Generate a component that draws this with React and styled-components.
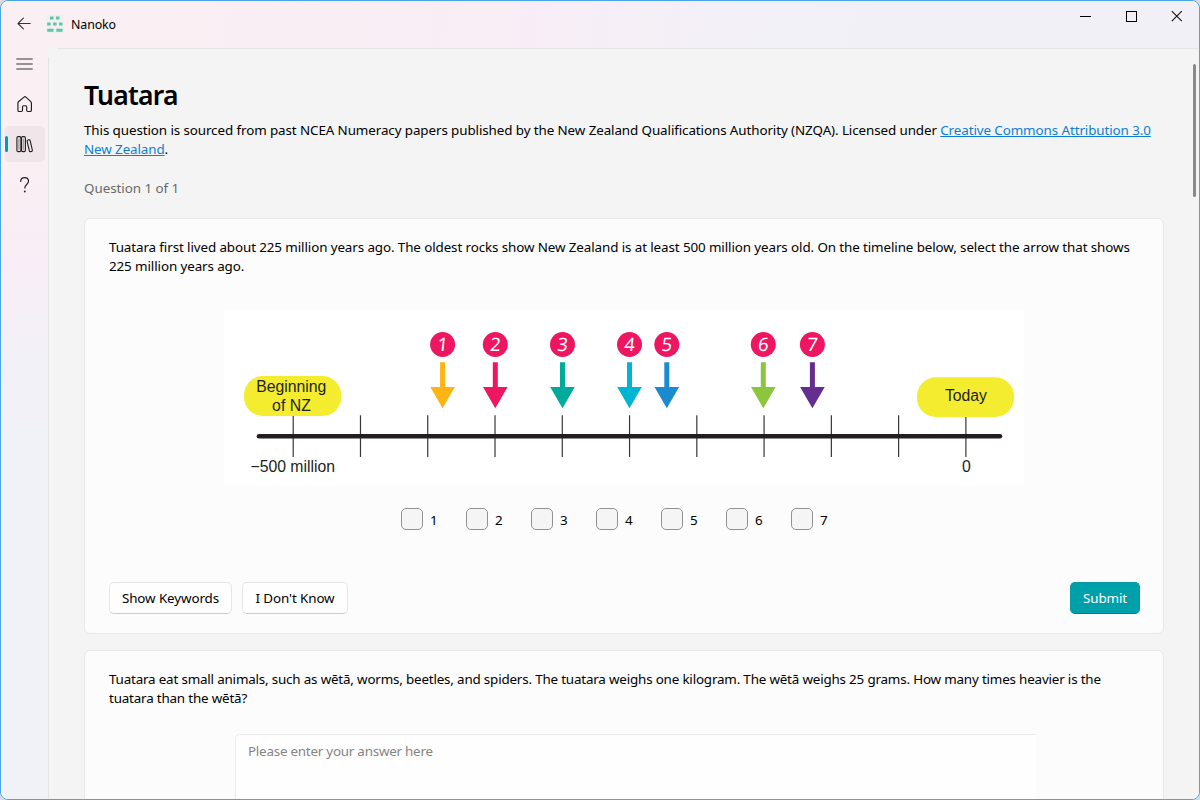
import React from "react";
import styled, { createGlobalStyle } from "styled-components";

const Global = createGlobalStyle`
  * { box-sizing: border-box; }
  html, body { margin: 0; background: #d9dde3; overflow: hidden; }
  body { font-family: "Noto Sans", "Open Sans", sans-serif; font-size: 13.4px; line-height: 19px; color: #000; }
  button { font: inherit; color: inherit; }
`;

const Window = styled.div`
  width: 1200px;
  height: 800px;
  overflow: hidden;
  display: flex;
  flex-direction: column;
  border: 1px solid #4ba4e6;
  border-radius: 8px;
`;

const TitleBar = styled.header`
  height: 47px;
  flex: none;
  display: flex;
  align-items: flex-start;
  justify-content: space-between;
  background: linear-gradient(100deg, #faeff2 0%, #faeff3 15%, #f9edf6 42%, #f3f0f7 60%, #f1f0f7 100%);
`;

const Brand = styled.div`
  display: flex;
  align-items: center;
  height: 46px;
  padding-left: 16px;
  svg { display: block; }
`;

const BrandMark = styled.svg`
  margin-left: 13px;
`;

const BrandName = styled.span`
  margin: 2px 0 0 7px;
  font-size: 12.4px;
  line-height: 16px;
  letter-spacing: -0.12px;
`;

const WindowControls = styled.div`
  display: flex;
  margin-right: -1px;
  svg { display: block; }
`;

const ControlButton = styled.div`
  width: 46px;
  height: 30px;
  display: flex;
  align-items: center;
  justify-content: center;
`;

const Body = styled.div`
  flex: 1;
  min-height: 0;
  display: flex;
`;

const Rail = styled.nav`
  width: 47px;
  flex: none;
  display: flex;
  flex-direction: column;
  gap: 4px;
  padding-left: 4px;
  background: linear-gradient(to bottom, #faeff2 0, #faeff3 120px, #f9edf6 205px, #f3f0f7 300px, #f0f2f8 410px, #f0f2f8 100%);
`;

const RailItem = styled.div`
  position: relative;
  width: 40px;
  height: 36px;
  flex: none;
  display: flex;
  align-items: center;
  justify-content: center;
  border-radius: 5px;
  background: ${(p) => (p.$active ? "#f0e6ea" : "transparent")};
  svg { display: block; }
  &:first-child { height: 34px; padding: 0 1px 2px 0; }
  &:last-child { padding-top: 1px; }
  &::before {
    content: "";
    display: ${(p) => (p.$active ? "block" : "none")};
    position: absolute;
    left: 0;
    top: 10px;
    width: 3px;
    height: 16px;
    border-radius: 2px;
    background: #00a0aa;
  }
`;

const Content = styled.main`
  flex: 1;
  min-width: 0;
  overflow: hidden;
  padding: 1px 0 0 1px;
  display: flex;
  justify-content: space-between;
  background:
    linear-gradient(#e5e4e7, #e5e4e7) 9px 0 / 100% 1px no-repeat,
    linear-gradient(#e5e4e7, #e5e4e7) 0 9px / 1px 100% no-repeat,
    #f4f4f4;
`;

const Page = styled.div`
  width: 1080px;
  margin-left: 35px;
  flex: none;
`;

const ScrollThumb = styled.div`
  width: 3px;
  height: 133px;
  margin: 15px 3px 0 0;
  border-radius: 2px;
  background: #8a8a8a;
`;

const Title = styled.h1`
  margin: 28px 0 0;
  font-size: 26.5px;
  line-height: 36px;
  font-weight: 600;
  letter-spacing: -0.75px;
`;

const Line = styled.div`
  white-space: nowrap;
  height: 19px;
  letter-spacing: ${(p) => p.$ls ?? -0.1}px;
`;

const Source = styled.div`
  margin-top: 8px;
`;

const Link = styled.a`
  color: #0e7fd0;
  text-decoration: underline;
  text-decoration-thickness: 1px;
  text-underline-offset: 1px;
`;

const Counter = styled(Line)`
  margin: 20px 0 20px;
  color: #6a6a6a;
`;

const Card = styled.section`
  height: ${(p) => p.$height}px;
  margin-bottom: 16px;
  padding: 19px 23px 19px 24px;
  display: flex;
  flex-direction: column;
  border: 1px solid #e9e9e9;
  border-radius: 6px;
  background: #fcfcfc;
`;

const Figure = styled.svg`
  display: block;
  flex: none;
  margin: 34px auto 0 115px;
  background: #fff;
  font-family: "Liberation Sans", Arial, sans-serif;
  fill: #231f20;
`;

const Options = styled.div`
  display: flex;
  margin: 24px 0 0 292px;
`;

const Option = styled.label`
  width: 65px;
  height: 22px;
  display: flex;
  align-items: center;
  gap: 7px;
`;

const OptionText = styled.span`
  padding-top: 2px;
`;

const Box = styled.span`
  width: 22px;
  height: 22px;
  border: 1px solid #929292;
  border-radius: 5px;
  background: #f5f5f5;
`;

const Actions = styled.div`
  display: flex;
  gap: 10px;
  margin-top: auto;
`;

const Button = styled.button`
  width: ${(p) => p.$width}px;
  height: 32px;
  padding: 0;
  white-space: nowrap;
  border: 1px solid ${(p) => (p.$primary ? "#069aa4" : "#e6e6e6")};
  border-bottom-color: ${(p) => (p.$primary ? "#04818a" : "#cbcbcb")};
  border-radius: 5px;
  background: ${(p) => (p.$primary ? "#00a0aa" : "#fefefe")};
  color: ${(p) => (p.$primary ? "#fff" : "#000")};
  letter-spacing: -0.1px;
  margin-left: ${(p) => (p.$primary ? "auto" : "0")};
`;

const Answer = styled.div`
  width: 801px;
  height: 120px;
  margin: 26px 0 0 126px;
  padding: 7px 12px;
  border: 1px solid #ebebeb;
  border-right: 0;
  border-radius: 5px 0 0 0;
  background: #fefefe;
  color: #858585;
  letter-spacing: -0.23px;
`;

const TICKS = Array.from({ length: 11 }, (_, i) => 69.2 + i * 67.27);
const ARROWS = [
  { x: 218.6, color: "#fdb515" },
  { x: 271.3, color: "#ee1660" },
  { x: 338.5, color: "#00ab9c" },
  { x: 405.5, color: "#00b5d2" },
  { x: 442.8, color: "#1b8bd0" },
  { x: 539.3, color: "#8cc63f" },
  { x: 588.4, color: "#662d91" },
];

function Timeline() {
  return (
    <Figure width="800" height="174" viewBox="0 0 800 174">
      {TICKS.map((x) => (
        <line key={x} x1={x} x2={x} y1="105.3" y2="147" stroke="#3a3637" strokeWidth="1.2" />
      ))}
      <line x1="35" x2="776" y1="126.2" y2="126.2" stroke="#231f20" strokeWidth="4.6" strokeLinecap="round" />
      <rect x="20" y="66" width="97.3" height="40" rx="19" fill="#f4ec2e" />
      <rect x="693" y="67.2" width="97" height="39.8" rx="19" fill="#f4ec2e" />
      <text x="67.3" y="82.3" fontSize="15.8" textAnchor="middle" textLength="70">Beginning</text>
      <text x="67.5" y="101" fontSize="15.8" textAnchor="middle" textLength="39">of NZ</text>
      <text x="742" y="91" fontSize="15.8" textAnchor="middle" textLength="42">Today</text>
      <text x="68.7" y="162" fontSize="15.8" textAnchor="middle" textLength="84.5">−500 million</text>
      <text x="742.3" y="162" fontSize="15.8" textAnchor="middle">0</text>
      {ARROWS.map(({ x, color }, i) => (
        <g key={color}>
          <circle cx={x} cy="34.5" r="12.5" fill="#ee1660" />
          <text
            transform={`translate(${x - 0.5} 41) skewX(-6)`}
            fontSize="18.5"
            fontFamily="'Noto Sans', sans-serif"
            textAnchor="middle"
            fill="#fff"
          >
            {i + 1}
          </text>
          <path d={`M${x - 2.5} 52.2h5v24.7h9.8L${x} 98.2L${x - 12.3} 76.9h9.8z`} fill={color} />
        </g>
      ))}
    </Figure>
  );
}

function BackIcon() {
  return (
    <svg width="16" height="16" viewBox="0 0 16 16" fill="none" stroke="#333" strokeWidth="1.1" strokeLinecap="round" strokeLinejoin="round">
      <path d="M13.2 7.5H1M6.4 2.1L1 7.5l5.4 5.4" />
    </svg>
  );
}

function Logo() {
  return (
    <BrandMark width="18" height="18" viewBox="0 0 18 18">
      <rect width="18" height="18" fill="#f0f0f1" />
      <g fill="#5bc5a7">
        <path d="M4 1.5h3.5v3H4zM10 1.5h3.5v3H10zM1.2 7.4h3.4v3H1.2zM7.2 7.4h3.4v3H7.2zM13.1 7.4h3.4v3h-3.4zM1.2 13.7h6.3v3H1.2zM10.3 13.7h6.3v3h-6.3z" />
      </g>
    </BrandMark>
  );
}

function MenuIcon() {
  return (
    <svg width="18" height="16" viewBox="0 0 18 16" fill="none" stroke="#777377" strokeWidth="1.6">
      <path d="M.3 3h16.4M.3 8h16.4M.3 13h16.4" />
    </svg>
  );
}

function HomeIcon() {
  return (
    <svg width="18" height="18" viewBox="0 0 18 18" fill="none" stroke="#1f1f1f" strokeWidth="1.15" strokeLinejoin="round">
      <path d="M8 2.1L2.5 6.7a1.8 1.8 0 0 0-.6 1.3v7.2c0 .8.5 1.3 1.2 1.3h2.2c.7 0 1.2-.5 1.2-1.2v-3.4c0-.8.4-1.2 1.1-1.2h2c.7 0 1.1.4 1.1 1.2v3.4c0 .7.5 1.2 1.2 1.2h2.2c.8 0 1.3-.5 1.3-1.3V8c0-.5-.2-1-.6-1.3L9.9 2.1a1.5 1.5 0 0 0-1.9 0z" />
    </svg>
  );
}

function LibraryIcon() {
  return (
    <svg width="18" height="18" viewBox="0 0 18 18" fill="none" stroke="#1f1f1f" strokeWidth="1.1">
      <path d="M2.9 3.5v11.2M7.4 3.5v11.2" stroke="#a59fa3" strokeWidth="1.4" />
      <rect x=".9" y="1.6" width="4" height="15" rx="1.3" />
      <rect x="5.5" y="1.6" width="3.9" height="15" rx="1.3" />
      <rect x="12.2" y="4.7" width="3.1" height="12" rx="1.1" transform="rotate(-13 13.7 10.7)" />
    </svg>
  );
}

function HelpIcon() {
  return (
    <svg width="18" height="18" viewBox="0 0 18 18" fill="none" stroke="#1f1f1f" strokeWidth="1.2" strokeLinecap="round">
      <path d="M4.7 5.5c.1-2.3 1.6-3.9 3.9-3.9s3.9 1.6 3.9 3.7c0 3.2-3.7 3.2-3.7 6.6" />
      <circle cx="8.8" cy="15.5" r=".9" fill="#1f1f1f" stroke="none" />
    </svg>
  );
}

export default function App() {
  return (
    <>
      <Global />
      <Window>
        <TitleBar>
          <Brand>
            <BackIcon />
            <Logo />
            <BrandName>Nanoko</BrandName>
          </Brand>
          <WindowControls>
            <ControlButton>
              <svg width="12" height="12"><path d="M.5 6.5h11" stroke="#000" shapeRendering="crispEdges" /></svg>
            </ControlButton>
            <ControlButton>
              <svg width="12" height="12"><path d="M1.5 1.5h10v10h-10z" fill="none" stroke="#000" shapeRendering="crispEdges" /></svg>
            </ControlButton>
            <ControlButton>
              <svg width="12" height="12"><path d="M.8 1.2l10 10M10.8 1.2l-10 10" stroke="#111" strokeWidth="1.1" /></svg>
            </ControlButton>
          </WindowControls>
        </TitleBar>
        <Body>
          <Rail>
            <RailItem><MenuIcon /></RailItem>
            <RailItem><HomeIcon /></RailItem>
            <RailItem $active><LibraryIcon /></RailItem>
            <RailItem><HelpIcon /></RailItem>
          </Rail>
          <Content>
            <Page>
              <Title>Tuatara</Title>
              <Source>
                <Line $ls={-0.094}>
                  This question is sourced from past NCEA Numeracy papers published by the New Zealand Qualifications Authority (NZQA). Licensed under <Link>Creative Commons Attribution 3.0</Link>
                </Line>
                <Line><Link>New Zealand</Link>.</Line>
              </Source>
              <Counter $ls={-0.05}>Question 1 of 1</Counter>
              <Card $height={416}>
                <Line $ls={-0.102}>Tuatara first lived about 225 million years ago. The oldest rocks show New Zealand is at least 500 million years old. On the timeline below, select the arrow that shows</Line>
                <Line>225 million years ago.</Line>
                <Timeline />
                <Options>
                  {ARROWS.map((a, i) => (
                    <Option key={a.color}><Box /><OptionText>{i + 1}</OptionText></Option>
                  ))}
                </Options>
                <Actions>
                  <Button $width={123}>Show Keywords</Button>
                  <Button $width={106}>I Don't Know</Button>
                  <Button $width={70} $primary>Submit</Button>
                </Actions>
              </Card>
              <Card $height={300}>
                <Line $ls={-0.178}>Tuatara eat small animals, such as wētā, worms, beetles, and spiders. The tuatara weighs one kilogram. The wētā weighs 25 grams. How many times heavier is the</Line>
                <Line $ls={-0.18}>tuatara than the wētā?</Line>
                <Answer>Please enter your answer here</Answer>
              </Card>
            </Page>
            <ScrollThumb />
          </Content>
        </Body>
      </Window>
    </>
  );
}
